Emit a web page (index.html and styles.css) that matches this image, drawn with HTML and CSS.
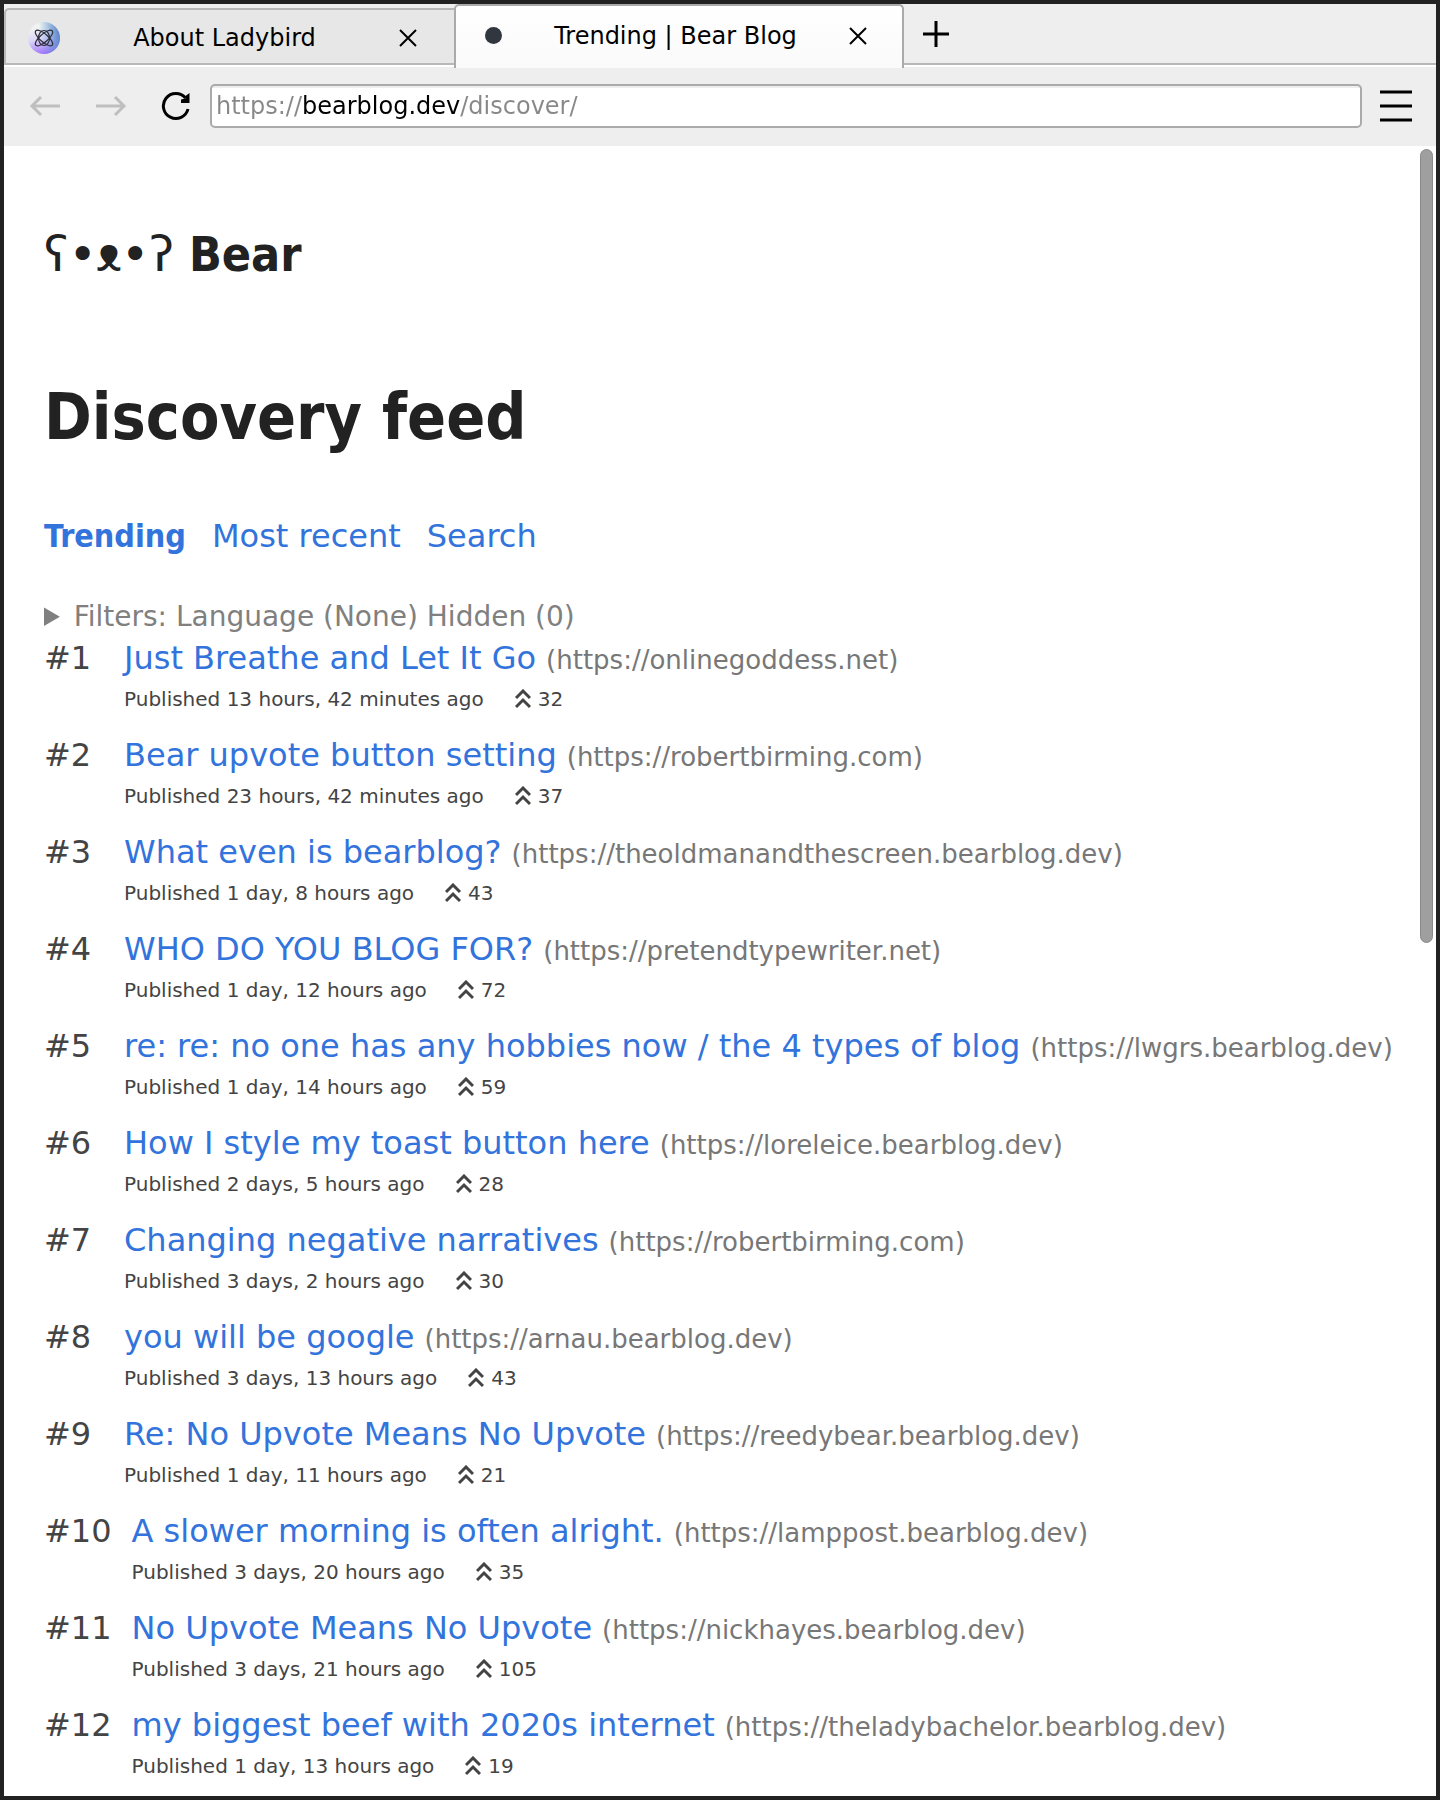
FILE: index.html
```html
<!DOCTYPE html>
<html lang="en">
<head>
    <meta charset="UTF-8">
    <meta name="viewport" content="width=device-width, initial-scale=1.0">
    <title>Trending | Bear Blog</title>
    <link rel="stylesheet" href="styles.css">
</head>
<body>
    <div class="window">
        <div class="tab-bar">
            <div class="tab">
                <svg class="favicon" viewBox="0 0 32 32">
                    <defs>
                        <linearGradient id="orb" x1="0.35" y1="0" x2="0.6" y2="1">
                            <stop offset="0.15" stop-color="#f0f3f1"/>
                            <stop offset="0.5" stop-color="#dcd6f8"/>
                            <stop offset="1" stop-color="#9a6cfb"/>
                        </linearGradient>
                        <linearGradient id="orbBlue" x1="0.4" y1="0.5" x2="1" y2="0.4">
                            <stop offset="0" stop-color="#5b9fd0" stop-opacity="0"/>
                            <stop offset="1" stop-color="#5b83cc"/>
                        </linearGradient>
                    </defs>
                    <circle cx="16" cy="16" r="16" fill="url(#orb)"/>
                    <circle cx="16" cy="16" r="16" fill="url(#orbBlue)"/>
                    <g fill="none" stroke="#2d2d3a" stroke-width="1.2">
                        <ellipse cx="16" cy="16" rx="11" ry="4" transform="rotate(41 16 16)"/>
                        <ellipse cx="16" cy="16" rx="11" ry="4" transform="rotate(-41 16 16)"/>
                        <ellipse cx="16" cy="16" rx="5.500" ry="7.500"/>
                    </g>
                </svg>
                <span class="tab-title">About Ladybird</span>
                <button class="tab-close" aria-label="Close tab">
                    <svg viewBox="0 0 18 18"><path d="M1 1L17 17M17 1L1 17"/></svg>
                </button>
            </div>
            <div class="tab active">
                <span class="loading-dot"></span>
                <span class="tab-title">Trending | Bear Blog</span>
                <button class="tab-close" aria-label="Close tab">
                    <svg viewBox="0 0 18 18"><path d="M1 1L17 17M17 1L1 17"/></svg>
                </button>
            </div>
            <button class="new-tab" aria-label="New tab">
                <svg viewBox="0 0 26 26"><path d="M13 0V26M0 13H26"/></svg>
            </button>
        </div>

        <div class="toolbar">
            <button class="nav-button" aria-label="Back" disabled>
                <svg viewBox="0 0 32 32"><path d="M31 16H3M12 7L3 16L12 25"/></svg>
            </button>
            <button class="nav-button" aria-label="Forward" disabled>
                <svg viewBox="0 0 32 32"><path d="M1 16H29M20 7L29 16L20 25"/></svg>
            </button>
            <button class="nav-button reload" aria-label="Reload">
                <svg viewBox="0 0 32 32"><path d="M27 19A12.5 12.5 0 1 1 24.500 8"/><path class="reload-tip" d="M28.500 3V13H20V9.500L24.500 8.500V6Z"/></svg>
            </button>
            <div class="location">
                <input class="location-input" type="text" aria-label="Address" value="https://bearblog.dev/discover/">
            </div>
            <button class="menu-button" aria-label="Menu">
                <svg viewBox="0 0 32 32"><path d="M0 2H32M0 16H32M0 30H32"/></svg>
            </button>
        </div>

        <div class="viewport">
            <div class="scrollbar"></div>
            <header class="site-title">ʕ•<span class="snout">ᴥ</span>•ʔ<b> Bear</b></header>
            <h1>Discovery feed</h1>
            <nav class="feed-nav">
                <a class="current" href="#">Trending</a>
                <a href="#">Most recent</a>
                <a href="#">Search</a>
            </nav>
            <details class="filters">
                <summary>Filters: Language (None) Hidden (0)</summary>
            </details>
            <ul class="posts" id="posts"></ul>
        </div>
    </div>

    <script>
        const posts = [
            ['Just Breathe and Let It Go', 'onlinegoddess.net', '13 hours, 42 minutes', 32],
            ['Bear upvote button setting', 'robertbirming.com', '23 hours, 42 minutes', 37],
            ['What even is bearblog?', 'theoldmanandthescreen.bearblog.dev', '1 day, 8 hours', 43],
            ['WHO DO YOU BLOG FOR?', 'pretendtypewriter.net', '1 day, 12 hours', 72],
            ['re: re: no one has any hobbies now / the 4 types of blog', 'lwgrs.bearblog.dev', '1 day, 14 hours', 59],
            ['How I style my toast button here', 'loreleice.bearblog.dev', '2 days, 5 hours', 28],
            ['Changing negative narratives', 'robertbirming.com', '3 days, 2 hours', 30],
            ['you will be google', 'arnau.bearblog.dev', '3 days, 13 hours', 43],
            ['Re: No Upvote Means No Upvote', 'reedybear.bearblog.dev', '1 day, 11 hours', 21],
            ['A slower morning is often alright.', 'lamppost.bearblog.dev', '3 days, 20 hours', 35],
            ['No Upvote Means No Upvote', 'nickhayes.bearblog.dev', '3 days, 21 hours', 105],
            ['my biggest beef with 2020s internet', 'theladybachelor.bearblog.dev', '1 day, 13 hours', 19]
        ];

        const list = document.getElementById('posts');

        posts.forEach(([title, domain, age, votes], i) => {
            const item = document.createElement('li');
            item.className = 'post';
            item.innerHTML = `
                <span class="rank">#${i + 1}</span>
                <div class="post-body">
                    <div class="post-head">
                        <a href="#">${title}</a>
                        <span class="domain">(https://${domain})</span>
                    </div>
                    <div class="post-meta">
                        <span>Published ${age} ago</span>
                        <span class="votes">
                            <svg viewBox="0 0 16 20"><path d="M1 9L8 2L15 9M1 18L8 11L15 18"/></svg>
                            ${votes}
                        </span>
                    </div>
                </div>
            `;
            list.appendChild(item);
        });
    </script>
</body>
</html>
```
FILE: styles.css
```css
* {
    box-sizing: border-box;
}

body {
    margin: 0;
    font-family: 'DejaVu Sans', sans-serif;
    color: #444;
    background: #fff;
}

button {
    display: flex;
    align-items: center;
    justify-content: center;
    padding: 0;
    border: none;
    background: none;
    color: #000;
    flex-shrink: 0;
}

svg {
    display: block;
    fill: none;
    stroke: currentColor;
    flex-shrink: 0;
}

a {
    color: #3273dc;
    text-decoration: none;
}

.window {
    min-height: 100vh;
    border: 4px solid #222;
}

/* Tabs */
.tab-bar {
    display: flex;
    align-items: flex-end;
    height: 64px;
    background: linear-gradient(#eee 59px, #b8b8b8 59px, #b8b8b8 61px, #fff 61px, #fff 63px, #eee 63px);
}

.tab {
    display: flex;
    align-items: center;
    width: 450px;
    height: 57px;
    margin-bottom: 3px;
    padding: 2px 37px 0 22px;
    border: 2px solid #b8b8b8;
    border-right: none;
    border-radius: 5px 0 0 0;
    background: #e7e7e7;
    color: #000;
    font-size: 24px;
}

.tab.active {
    height: 64px;
    width: 450px;
    margin-bottom: 0;
    padding: 0 35px 3px 29px;
    border: 2px solid #aaa;
    border-bottom: none;
    border-radius: 5px 5px 0 0;
    background: linear-gradient(#fff, #fafafa);
}

.favicon {
    width: 32px;
    height: 32px;
    margin-right: -10px;
    stroke: none;
}

.loading-dot {
    width: 17px;
    height: 17px;
    border-radius: 50%;
    background: #31363f;
}

.tab-title {
    flex: 1;
    text-align: center;
}

.tab-close svg {
    width: 18px;
    height: 18px;
    stroke-width: 2;
}

.new-tab {
    height: 60px;
    margin-bottom: 4px;
    padding-left: 19px;
}

.new-tab svg {
    width: 26px;
    height: 26px;
    stroke-width: 3;
}

/* Toolbar */
.toolbar {
    display: flex;
    align-items: center;
    height: 78px;
    padding: 0 24px 2px 25px;
    background: #eee;
}

.nav-button {
    margin-right: 34px;
}

.nav-button svg {
    width: 32px;
    height: 32px;
    stroke-width: 3;
}

.nav-button:disabled {
    color: #bfbfbf;
}

.nav-button.reload {
    margin-right: 17px;
}

.reload-tip {
    fill: currentColor;
    stroke: none;
}

.location {
    flex: 1;
    height: 44px;
    margin-right: 18px;
    border: 2px solid #aaa;
    border-radius: 5px;
    background: linear-gradient(#eee 2px, #fff 2px);
}

/* Scheme and path are dimmed, the host stays black */
.location-input {
    width: 100%;
    height: 40px;
    padding: 0 4px;
    border: none;
    outline: none;
    background: linear-gradient(to right, #888 90px, #000 90px, #000 248px, #888 248px);
    background-clip: text;
    -webkit-background-clip: text;
    color: transparent;
    font-family: inherit;
    font-size: 24px;
}

.menu-button svg {
    width: 32px;
    height: 32px;
    stroke-width: 3;
}

/* Page */
.viewport {
    position: relative;
    padding: 78px 40px 10px;
}

.scrollbar {
    position: absolute;
    top: 3px;
    right: 3px;
    width: 13px;
    height: 794px;
    border: 1px solid #8a8a8a;
    border-radius: 7px;
    background: #9f9f9f;
}

.site-title {
    color: #222;
    font-size: 48px;
    line-height: 60px;
}

.site-title .snout {
    font-family: 'Noto Sans', sans-serif;
    line-height: 48px;
}

.site-title b,
h1,
.feed-nav .current {
    font-family: 'DejaVu Sans Condensed', 'DejaVu Sans', sans-serif;
    font-weight: bold;
}

h1 {
    margin: 93px 0 55px;
    color: #222;
    font-size: 64px;
    line-height: 80px;
}

.feed-nav {
    display: flex;
    gap: 26px;
    font-size: 32px;
    line-height: 48px;
}

.filters {
    margin-top: 40px;
    color: #808080;
    font-size: 28px;
    line-height: 34px;
}

.posts {
    display: flex;
    flex-direction: column;
    gap: 15px;
    margin: 0;
    padding: 0;
    list-style: none;
}

.post {
    display: flex;
    gap: 20px;
    font-size: 32px;
    line-height: 48px;
}

.rank {
    min-width: 60px;
}

.post-head {
    display: flex;
    align-items: baseline;
    gap: 10px;
}

.domain {
    color: #777;
    font-size: 26px;
    line-height: 32px;
}

.post-meta {
    display: flex;
    gap: 31px;
    font-size: 20px;
    line-height: 34px;
}

.votes {
    display: flex;
    align-items: center;
    gap: 7px;
}

.votes svg {
    width: 16px;
    height: 20px;
    stroke-width: 3;
}
```
